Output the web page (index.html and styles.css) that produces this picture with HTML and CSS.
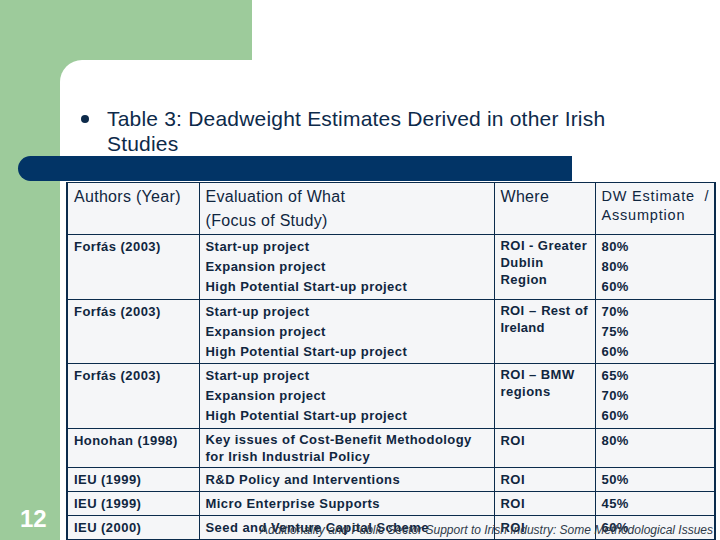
FILE: index.html
```html
<!DOCTYPE html>
<html>
<head>
<meta charset="utf-8">
<link rel="stylesheet" href="styles.css">
</head>
<body>
<div class="slide">
  <div class="top"><div class="top-green"></div></div>
  <div class="main">
    <div class="side"><span class="num">12</span></div>
    <div class="panel">
      <div class="title">
        <span class="bullet"></span>
        <h1>Table 3: Deadweight Estimates Derived in other Irish<br>Studies</h1>
      </div>
      <div class="bar"></div>
      <table>
        <colgroup>
          <col class="c1"><col class="c2"><col class="c3"><col class="c4">
        </colgroup>
        <tr class="rh">
          <th>Authors (Year)</th>
          <th>Evaluation of What<br>(Focus of Study)</th>
          <th>Where</th>
          <th class="dw">DW Estimate &nbsp;/<br>Assumption</th>
        </tr>
        <tr class="r3">
          <td>Forfás (2003)</td>
          <td>Start-up project<br>Expansion project<br>High Potential Start-up project</td>
          <td class="wrap">ROI - Greater<br>Dublin<br>Region</td>
          <td>80%<br>80%<br>60%</td>
        </tr>
        <tr class="r3b">
          <td>Forfás (2003)</td>
          <td>Start-up project<br>Expansion project<br>High Potential Start-up project</td>
          <td class="wrap spaced">ROI – Rest of<br>Ireland</td>
          <td>70%<br>75%<br>60%</td>
        </tr>
        <tr class="r3">
          <td>Forfás (2003)</td>
          <td>Start-up project<br>Expansion project<br>High Potential Start-up project</td>
          <td class="wrap">ROI – BMW<br>regions</td>
          <td>65%<br>70%<br>60%</td>
        </tr>
        <tr class="r2">
          <td>Honohan (1998)</td>
          <td class="wrap">Key issues of Cost-Benefit Methodology<br>for Irish Industrial Policy</td>
          <td>ROI</td>
          <td>80%</td>
        </tr>
        <tr class="r1">
          <td>IEU (1999)</td>
          <td>R&amp;D Policy and Interventions</td>
          <td>ROI</td>
          <td>50%</td>
        </tr>
        <tr class="r1">
          <td>IEU (1999)</td>
          <td>Micro Enterprise Supports</td>
          <td>ROI</td>
          <td>45%</td>
        </tr>
        <tr class="r1">
          <td>IEU (2000)</td>
          <td>Seed and Venture Capital Scheme</td>
          <td>ROI</td>
          <td>60%</td>
        </tr>
      </table>
    </div>
  </div>
  <div class="footer">Additionality and Public Sector Support to Irish Industry: Some Methodological Issues</div>
</div>
</body>
</html>
```
FILE: styles.css
```css
html, body {
  margin: 0;
  padding: 0;
  background: #ffffff;
}

.slide {
  position: relative;
  width: 720px;
  height: 540px;
  overflow: hidden;
  background: #ffffff;
  font-family: "Liberation Sans", Arial, sans-serif;
}

.top {
  display: flex;
  height: 60px;
}

.top-green {
  width: 252px;
  background: #9dcb9b;
}

.main {
  display: flex;
  height: 480px;
  background: #9dcb9b;
}

.side {
  flex: none;
  width: 60px;
  box-sizing: border-box;
  display: flex;
  align-items: flex-end;
  padding: 0 0 9px 20px;
}

.num {
  color: #ffffff;
  font-weight: bold;
  font-size: 24px;
  line-height: 24px;
}

.panel {
  flex: 1;
  background: #ffffff;
  border-top-left-radius: 22px;
  padding: 46px 6px 0 6px;
}

.title {
  display: flex;
  align-items: flex-start;
  padding-left: 15px;
}

.bullet {
  flex: none;
  width: 8px;
  height: 8px;
  border-radius: 50%;
  background: #0d2a4a;
  margin: 9px 18px 0 0;
}

.title h1 {
  margin: 0;
  font-size: 21px;
  font-weight: normal;
  line-height: 25px;
  letter-spacing: 0.2px;
  color: #0d2a4a;
}

.bar {
  width: 554px;
  height: 25px;
  margin: 0 0 1px -48px;
  background: #023466;
  border-radius: 12.5px 0 0 12.5px;
}

table {
  border-collapse: collapse;
  table-layout: fixed;
  width: 648px;
  background: #f5f6f8;
  color: #10263f;
  border-left: 2px solid #0b2b4c;
  border-right: 2px solid #0b2b4c;
}

.c1 { width: 132px; }
.c2 { width: 295px; }
.c3 { width: 101px; }
.c4 { width: 120px; }

th, td {
  border: 1px solid #0b2b4c;
  padding: 2px 6px 0 6px;
  vertical-align: top;
  text-align: left;
  white-space: nowrap;
  overflow: hidden;
}

th {
  font-weight: normal;
  font-size: 16px;
  line-height: 24px;
  letter-spacing: 0.3px;
}

th.dw {
  font-size: 14.5px;
  line-height: 19px;
  padding-top: 4px;
  letter-spacing: 0.8px;
}

td {
  font-weight: bold;
  font-size: 13px;
  line-height: 20px;
  letter-spacing: 0.45px;
}

td.wrap {
  line-height: 17px;
}

td.spaced {
  letter-spacing: 0.2px;
  word-spacing: 1px;
}

.rh { height: 52px; }
.r3 { height: 65px; }
.r3b { height: 64px; }
.r2 { height: 39px; }
.r1 { height: 24px; }

.footer {
  position: absolute;
  right: 7px;
  bottom: 3px;
  font-style: italic;
  font-size: 12px;
  color: #2f3a48;
  white-space: nowrap;
}
```
